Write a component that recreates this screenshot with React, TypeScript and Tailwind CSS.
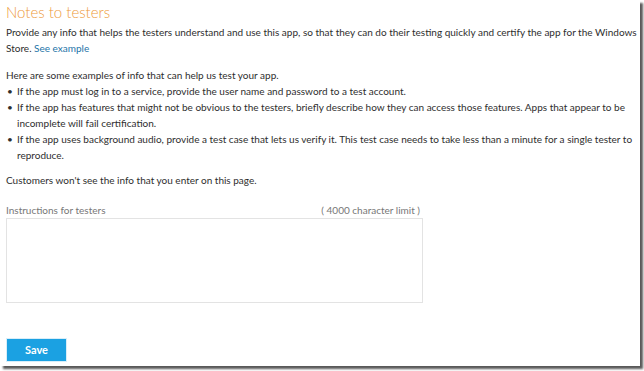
export default function App() {
  return (
    <div className="w-[644px] h-[371px] bg-white overflow-hidden" style={{ fontFamily: 'Lato, "Open Sans", sans-serif' }}>
      <div className="w-[640px] h-[366px] bg-white shadow-[3px_3px_2px_rgba(0,0,0,0.65)] px-[6px] pt-[1px] flex flex-col text-[10px] leading-[16px] text-[#2e2e2e] whitespace-nowrap">
        <h1 className="text-[15px] leading-[22px] font-light text-[#ee9a3a]">Notes to testers</h1>
        <p className="mt-[1px]">
          Provide any info that helps the testers understand and use this app, so that they can do their testing quickly and certify the app for the Windows
          <br />
          Store. <span className="text-[#1d74a8]">See example</span>
        </p>
        <p className="mt-[11px]">Here are some examples of info that can help us test your app.</p>
        <ul>
          <li className="flex">
            <span className="w-[11px] pl-[1px] shrink-0">•</span>
            <span>If the app must log in to a service, provide the user name and password to a test account.</span>
          </li>
          <li className="flex">
            <span className="w-[11px] pl-[1px] shrink-0">•</span>
            <span>
              If the app has features that might not be obvious to the testers, briefly describe how they can access those features. Apps that appear to be
              <br />
              incomplete will fail certification.
            </span>
          </li>
          <li className="flex">
            <span className="w-[11px] pl-[1px] shrink-0">•</span>
            <span>
              If the app uses background audio, provide a test case that lets us verify it. This test case needs to take less than a minute for a single tester to
              <br />
              reproduce.
            </span>
          </li>
        </ul>
        <p className="mt-[9px]">Customers won't see the info that you enter on this page.</p>
        <div className="w-[417px] mt-[15px]">
          <div className="flex justify-between text-[#777] leading-[14px]">
            <span>Instructions for testers</span>
            <span className="pr-[3px]">( 4000 character limit )</span>
          </div>
          <textarea className="block w-full h-[85px] border border-[#e3e3e3] resize-none outline-none mt-[1px]" />
        </div>
        <button className="mt-[35px] w-[61px] h-[24px] bg-[#1ba1e2] text-white font-bold text-[11px] border border-[#d8eef9]">
          Save
        </button>
      </div>
    </div>
  )
}
